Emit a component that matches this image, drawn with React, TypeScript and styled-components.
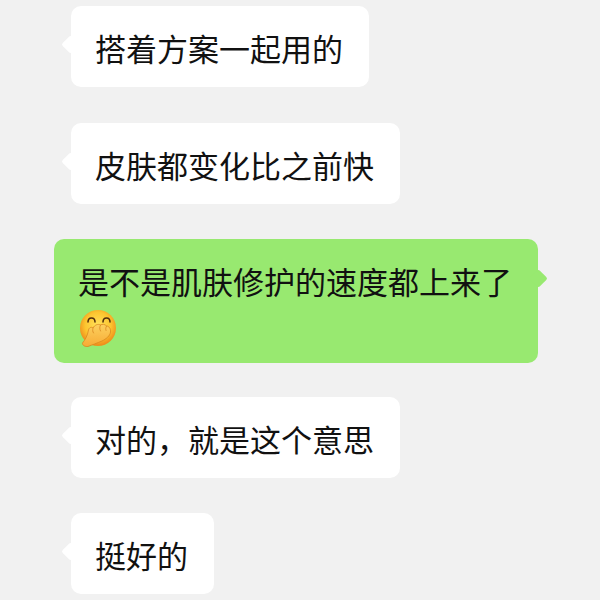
import styled, { createGlobalStyle } from "styled-components";

const GlobalStyle = createGlobalStyle`
html, body {
  margin: 0;
  padding: 0;
  background: #f1f1f1;
}
`;

const Chat = styled.div`
  width: 600px;
  height: 600px;
  box-sizing: border-box;
  overflow: hidden;
  padding: 6px 0 0 54px;
  display: flex;
  flex-direction: column;
  font-family: "Noto Sans CJK SC", "Liberation Sans", sans-serif;
`;

const Bubble = styled.div<{ $mine?: boolean; $gap: number }>`
  position: relative;
  box-sizing: border-box;
  align-self: flex-start;
  max-width: 484px;
  margin-left: ${(p) => (p.$mine ? "0" : "17px")};
  margin-bottom: ${(p) => p.$gap}px;
  padding: 20px 26px 18px 24px;
  border-radius: 10px;
  font-size: 31px;
  line-height: 43px;
  color: #111111;
  background: ${(p) => (p.$mine ? "#98e970" : "#ffffff")};

  &::before {
    content: "";
    position: absolute;
    top: ${(p) => (p.$mine ? "33px" : "32px")};
    ${(p) => (p.$mine ? "right: -7px;" : "left: -7px;")}
    width: 13px;
    height: 13px;
    border-radius: 2px;
    transform: rotate(45deg);
    background: inherit;
  }
`;

const Emoji = styled.svg`
  display: inline-block;
  width: 38px;
  height: 38px;
  margin-left: 1px;
  vertical-align: -8px;
  transform: translateY(2px);
`;

function HandOverMouth() {
  return (
    <Emoji viewBox="-1 0 38 38">
      <defs>
        <radialGradient id="face" cx="50%" cy="42%" r="55%">
          <stop offset="0%" stopColor="#ffe25c" />
          <stop offset="65%" stopColor="#fcc52f" />
          <stop offset="100%" stopColor="#ef8f1c" />
        </radialGradient>
        <linearGradient id="hand" x1="0" y1="0" x2="0" y2="1">
          <stop offset="0%" stopColor="#fcd05e" />
          <stop offset="100%" stopColor="#f7ab35" />
        </linearGradient>
      </defs>
      <circle cx="18" cy="19" r="18" fill="url(#face)" />
      <path d="M8 13c0-5.500 7-5.500 7 0M23 13c0-5.500 7-5.500 7 0" fill="none" stroke="#4f2c0c" strokeWidth="1.500" strokeLinecap="round" />
      <path
        d="M2.500 34C5 31 7.500 27 8.500 21c.5-2.500 3-3.500 4.500-2 1.500-3 5-4.500 7.500-3 1.500-1 4.500-1 6 1 2.500 0 4.500 3 4 6-.5 4-4.500 7-8.500 9-5 2-10 4-14 5.500C5 38 2 36 2.500 34z"
        fill="url(#hand)"
        stroke="#d9861f"
        strokeWidth=".8"
      />
      <path d="M13 19c-.5 2-.5 3.500.5 5M20.500 16c-1 2-1 4 0 6M26.500 17c-.8 1.500-1 3-.5 4.500" fill="none" stroke="#d9861f" strokeWidth=".8" strokeLinecap="round" />
    </Emoji>
  );
}

export default function App() {
  return (
    <>
      <GlobalStyle />
      <Chat>
        <Bubble $gap={36}>搭着方案一起用的</Bubble>
        <Bubble $gap={35}>皮肤都变化比之前快</Bubble>
        <Bubble $mine $gap={34}>
          是不是肌肤修护的速度都上来了
          <HandOverMouth />
        </Bubble>
        <Bubble $gap={35}>对的，就是这个意思</Bubble>
        <Bubble $gap={0}>挺好的</Bubble>
      </Chat>
    </>
  );
}
